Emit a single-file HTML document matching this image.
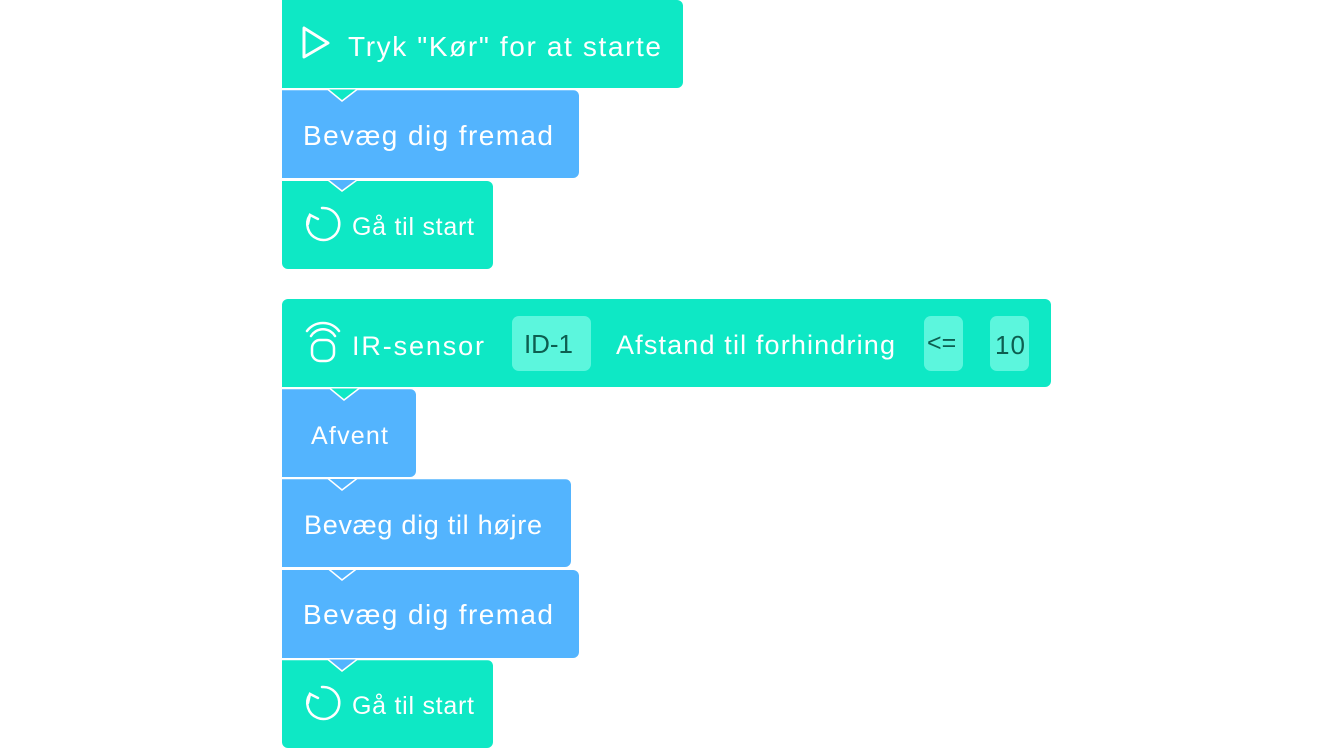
<!DOCTYPE html>
<html><head><meta charset="utf-8"><style>
html,body{margin:0;padding:0;background:#fff;width:1334px;height:750px;overflow:hidden}
svg text{font-family:"Liberation Sans","DejaVu Sans",sans-serif;fill:#fff}
</style></head><body>
<svg width="1334" height="750" viewBox="0 0 1334 750" xmlns="http://www.w3.org/2000/svg">
<path d="M282 0 H677 a6 6 0 0 1 6 6 V82 a6 6 0 0 1 -6 6 H282 Z" fill="#0ee8c5"/>
<path d="M282 90 H573 a6 6 0 0 1 6 6 V172 a6 6 0 0 1 -6 6 H282 Z" fill="#53b4fe"/>
<path d="M282 89.5 H328 L342 101 L357 89.5 Z" fill="#0ee8c5"/>
<polyline points="282,89.5 328,89.5 342,101 357,89.5 579,89.5" fill="none" stroke="#fff" stroke-width="1.5"/>
<path d="M282 181 H487 a6 6 0 0 1 6 6 V263 a6 6 0 0 1 -6 6 H288 a6 6 0 0 1 -6 -6 Z" fill="#0ee8c5"/>
<path d="M282 180 H328 L342 191 L357 180 Z" fill="#53b4fe"/>
<polyline points="282,180 328,180 342,191 357,180 493,180" fill="none" stroke="#fff" stroke-width="1.5"/>
<path d="M288 299 H1045 a6 6 0 0 1 6 6 V381 a6 6 0 0 1 -6 6 H282 V305 a6 6 0 0 1 6 -6 Z" fill="#0ee8c5"/>
<path d="M282 389 H410 a6 6 0 0 1 6 6 V471 a6 6 0 0 1 -6 6 H282 Z" fill="#53b4fe"/>
<path d="M282 388.5 H330 L344 400 L359 388.5 Z" fill="#0ee8c5"/>
<polyline points="282,388.5 330,388.5 344,400 359,388.5 416,388.5" fill="none" stroke="#fff" stroke-width="1.5"/>
<path d="M282 479 H565 a6 6 0 0 1 6 6 V561 a6 6 0 0 1 -6 6 H282 Z" fill="#53b4fe"/>
<polyline points="282,478.5 328,478.5 342,490 357,478.5 571,478.5" fill="none" stroke="#fff" stroke-width="1.5"/>
<path d="M282 570 H573 a6 6 0 0 1 6 6 V652 a6 6 0 0 1 -6 6 H282 Z" fill="#53b4fe"/>
<polyline points="282,568.5 328,568.5 342,580 357,568.5 579,568.5" fill="none" stroke="#fff" stroke-width="1.5"/>
<path d="M282 660 H487 a6 6 0 0 1 6 6 V742 a6 6 0 0 1 -6 6 H288 a6 6 0 0 1 -6 -6 Z" fill="#0ee8c5"/>
<path d="M282 659.5 H328 L342 671 L357 659.5 Z" fill="#53b4fe"/>
<polyline points="282,659.5 328,659.5 342,671 357,659.5 493,659.5" fill="none" stroke="#fff" stroke-width="1.5"/>

<path d="M304 28 L304 57 L328 43 Z" fill="none" stroke="#fff" stroke-width="3" stroke-linejoin="round"/>
<g fill="none" stroke="#fff" stroke-width="2.5" stroke-linecap="round">
<path d="M310 215 A16 16 0 1 0 322 208"/>
<path d="M308 224 L310 215 L318 219"/>
<path d="M310 694 A16 16 0 1 0 322 687"/>
<path d="M308 703 L310 694 L318 698"/>
</g>
<g fill="none" stroke="#fff" stroke-width="2.5" stroke-linecap="round">
<path d="M307 331 A20 20 0 0 1 339 331"/>
<path d="M311 336 A14 14 0 0 1 335 336"/>
<rect x="312" y="340" width="22" height="21" rx="8"/>
</g>

<rect x="512" y="316" width="79" height="55" rx="7" fill="#5cf6dd"/>
<rect x="924" y="316" width="39" height="55" rx="7" fill="#5cf6dd"/>
<rect x="990" y="316" width="39" height="55" rx="7" fill="#5cf6dd"/>

<text x="348" y="56" font-size="28" textLength="313" lengthAdjust="spacing">Tryk "Kør" for at starte</text>
<text x="303" y="145" font-size="28" textLength="250" lengthAdjust="spacing">Bevæg dig fremad</text>
<text x="352" y="235" font-size="25" textLength="122" lengthAdjust="spacing">Gå til start</text>
<text x="352" y="355" font-size="27" textLength="132" lengthAdjust="spacing">IR-sensor</text>
<text x="524" y="353" font-size="26" textLength="49" lengthAdjust="spacing" style="fill:#0d5e50">ID-1</text>
<text x="616" y="354" font-size="27" textLength="279" lengthAdjust="spacing">Afstand til forhindring</text>
<text x="927" y="351" font-size="25" style="fill:#0d5e50">&lt;=</text>
<text x="995" y="354" font-size="26" textLength="30" lengthAdjust="spacing" style="fill:#0d5e50">10</text>
<text x="311" y="444" font-size="25" textLength="77" lengthAdjust="spacing">Afvent</text>
<text x="304" y="534" font-size="27" textLength="238" lengthAdjust="spacing">Bevæg dig til højre</text>
<text x="303" y="624" font-size="28" textLength="250" lengthAdjust="spacing">Bevæg dig fremad</text>
<text x="352" y="714" font-size="25" textLength="122" lengthAdjust="spacing">Gå til start</text>
</svg>
</body></html>
